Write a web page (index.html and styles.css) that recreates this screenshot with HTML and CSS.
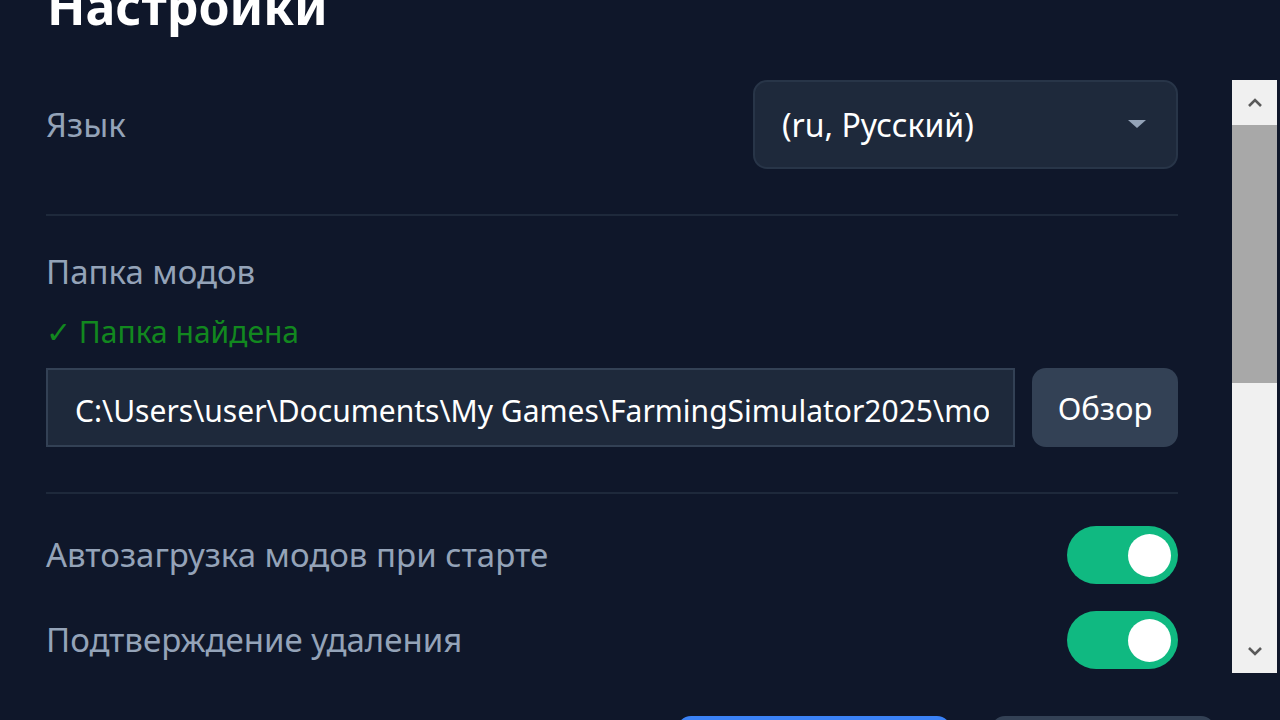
FILE: index.html
```html
<!DOCTYPE html>
<html lang="ru">
<head>
<meta charset="utf-8">
<title>Настройки</title>
<link rel="stylesheet" href="styles.css">
</head>
<body>
<div class="dialog">
  <h1 class="title">Настройки</h1>
  <div class="scroll-area">
    <div class="content">
      <div class="row row-lang">
        <span class="label">Язык</span>
        <div class="select">
          <span class="select-text">(ru, Русский)</span>
          <span class="select-caret"></span>
        </div>
      </div>
      <div class="divider"></div>
      <div class="folder">
        <div class="label">Папка модов</div>
        <div class="status">✓ Папка найдена</div>
        <div class="path-row">
          <div class="path-input"><span class="path-text">C:\Users\user\Documents\My Games\FarmingSimulator2025\mods</span></div>
          <button class="btn-browse">Обзор</button>
        </div>
      </div>
      <div class="divider divider-2"></div>
      <div class="row row-toggle">
        <span class="label">Автозагрузка модов при старте</span>
        <span class="toggle"><span class="knob"></span></span>
      </div>
      <div class="row row-toggle row-toggle-2">
        <span class="label">Подтверждение удаления</span>
        <span class="toggle"><span class="knob"></span></span>
      </div>
    </div>
    <div class="scrollbar">
      <div class="sb-btn">
        <svg width="16" height="10" viewBox="0 0 16 10"><path d="M2 8 L8 2 L14 8" fill="none" stroke="#5a5a5a" stroke-width="2.6"/></svg>
      </div>
      <div class="sb-thumb"></div>
      <div class="sb-track"></div>
      <div class="sb-btn">
        <svg width="16" height="10" viewBox="0 0 16 10"><path d="M2 2 L8 8 L14 2" fill="none" stroke="#5a5a5a" stroke-width="2.6"/></svg>
      </div>
    </div>
  </div>
  <div class="footer">
    <button class="btn-save">Сохранить</button>
    <button class="btn-cancel">Отмена</button>
  </div>
</div>
</body>
</html>
```
FILE: styles.css
```css
html, body {
  margin: 0;
  padding: 0;
  background: #0f172a;
  width: 1280px;
  height: 720px;
  overflow: hidden;
}

.dialog {
  font-family: "Noto Sans", "Open Sans", sans-serif;
  color: #94a3b8;
  display: flex;
  flex-direction: column;
  height: 720px;
  overflow: hidden;
}

.title {
  margin: -24px 0 0 47px;
  font-size: 50px;
  line-height: 60px;
  height: 60px;
  font-weight: 700;
  color: #ffffff;
  flex-shrink: 0;
}

.scroll-area {
  margin-top: 44px;
  display: flex;
  height: 593px;
  flex-shrink: 0;
}

.content {
  margin-left: 46px;
  width: 1132px;
  display: flex;
  flex-direction: column;
}

.label {
  font-size: 33px;
  line-height: 40px;
  color: #94a3b8;
  white-space: nowrap;
}

.row {
  display: flex;
  align-items: center;
  justify-content: space-between;
}

.select {
  box-sizing: border-box;
  width: 425px;
  height: 89px;
  background: #1e293b;
  border: 2px solid #283548;
  border-radius: 14px;
  display: flex;
  align-items: center;
  justify-content: space-between;
  padding: 0 30px 0 27px;
}

.select-text {
  color: #ffffff;
  font-size: 32px;
  line-height: 40px;
}

.select-caret {
  width: 0;
  height: 0;
  border-left: 9px solid transparent;
  border-right: 9px solid transparent;
  border-top: 8px solid #94a3b8;
  margin-top: -2px;
}

.divider {
  height: 2px;
  background: #1e293b;
  margin-top: 45px;
}

.folder {
  margin-top: 36px;
  display: flex;
  flex-direction: column;
}

.status {
  margin-top: 20px;
  font-size: 30px;
  line-height: 40px;
  color: #12881f;
}

.path-row {
  margin-top: 16px;
  display: flex;
  gap: 17px;
}

.path-input {
  box-sizing: border-box;
  width: 969px;
  height: 79px;
  background: #1e293b;
  border: 2px solid #334155;
  padding: 0 24px 0 27px;
}

.path-text {
  display: block;
  color: #ffffff;
  font-size: 30px;
  line-height: 81px;
  height: 75px;
  white-space: nowrap;
  overflow: hidden;
}

.btn-browse {
  flex: 1;
  height: 79px;
  border: none;
  border-radius: 14px;
  background: #334155;
  color: #ffffff;
  font-family: inherit;
  font-size: 31px;
  padding: 0;
}

.divider-2 {
  margin-top: 45px;
}

.row-toggle {
  margin-top: 32px;
  height: 58px;
}

.row-toggle-2 {
  margin-top: 27px;
}

.toggle {
  width: 111px;
  height: 58px;
  border-radius: 29px;
  background: #10b981;
  display: flex;
  align-items: center;
  justify-content: flex-end;
  padding-right: 7px;
  box-sizing: border-box;
}

.knob {
  width: 43px;
  height: 43px;
  border-radius: 50%;
  background: #ffffff;
}

.scrollbar {
  margin-left: 54px;
  width: 45px;
  display: flex;
  flex-direction: column;
  background: #f0f0f0;
}

.sb-btn {
  height: 45px;
  display: flex;
  align-items: center;
  justify-content: center;
}

.sb-thumb {
  height: 258px;
  background: #a8a8a8;
}

.sb-track {
  flex: 1;
}

.footer {
  margin-top: 43px;
  display: flex;
  gap: 40px;
  padding-left: 677px;
  flex-shrink: 0;
}

.btn-save {
  width: 274px;
  height: 60px;
  border: none;
  border-radius: 14px;
  background: #3b82f6;
  color: #ffffff;
  font-family: inherit;
  font-size: 30px;
}

.btn-cancel {
  width: 224px;
  height: 60px;
  border: none;
  border-radius: 14px;
  background: #334155;
  color: #ffffff;
  font-family: inherit;
  font-size: 30px;
}
```
